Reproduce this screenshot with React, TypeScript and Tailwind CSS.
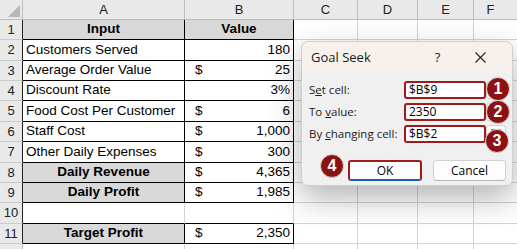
import React from 'react'

type Row = {
  n: number
  h: string
  a?: string
  b?: string
  dollar?: boolean
  kind: 'head' | 'plain' | 'total' | 'blank'
}

const rows: Row[] = [
  { n: 1, h: 'h-[20px]', a: 'Input', b: 'Value', kind: 'head' },
  { n: 2, h: 'h-[21px]', a: 'Customers Served', b: '180', kind: 'plain' },
  { n: 3, h: 'h-[20px]', a: 'Average Order Value', b: '25', dollar: true, kind: 'plain' },
  { n: 4, h: 'h-[20px]', a: 'Discount Rate', b: '3%', kind: 'plain' },
  { n: 5, h: 'h-[21px]', a: 'Food Cost Per Customer', b: '6', dollar: true, kind: 'plain' },
  { n: 6, h: 'h-[20px]', a: 'Staff Cost', b: '1,000', dollar: true, kind: 'plain' },
  { n: 7, h: 'h-[21px]', a: 'Other Daily Expenses', b: '300', dollar: true, kind: 'plain' },
  { n: 8, h: 'h-[20px]', a: 'Daily Revenue', b: '4,365', dollar: true, kind: 'total' },
  { n: 9, h: 'h-[20px]', a: 'Daily Profit', b: '1,985', dollar: true, kind: 'total' },
  { n: 10, h: 'h-[21px]', kind: 'blank' },
  { n: 11, h: 'h-[20px]', a: 'Target Profit', b: '2,350', dollar: true, kind: 'total' },
]

function Badge({ n, className }: { n: number; className: string }) {
  return (
    <div
      className={`absolute flex h-[24px] w-[24px] items-center justify-center rounded-full border border-[#d8d8d8] bg-[#8e1111] text-[16px] font-bold text-white ${className}`}
      style={{ fontFamily: '"Liberation Sans", Arial, sans-serif' }}
    >
      {n}
    </div>
  )
}

function Field({ label, value }: { label: React.ReactNode; value: string }) {
  return (
    <div className="flex h-[18px] items-center">
      <div className="w-[95px] text-[11.5px] text-[#1a1a1a]">{label}</div>
      <div className="flex h-[18px] w-[82px] items-center rounded-[3px] border-2 border-[#9e1b1b] bg-white pl-[3px] text-[12px] text-black">
        {value}
      </div>
    </div>
  )
}

function GoalSeek() {
  return (
    <div
      className="absolute left-[301px] top-[41px] h-[145px] w-[212px] rounded-[7px] border border-[#cfcfcf] bg-[#f0f0f0] shadow-[0_12px_32px_rgba(0,0,0,0.3)]"
      style={{ fontFamily: '"Open Sans", "Noto Sans", sans-serif' }}
    >
      <div className="flex h-[31px] items-center rounded-t-[7px] bg-[#f6f1ec] pl-[9px] text-[13px] text-[#1a1a1a]">
        <span>Goal Seek</span>
        <span className="ml-[64px] text-[13px]">?</span>
        <svg className="ml-[35px]" width="11" height="11" viewBox="0 0 11 11">
          <path d="M0.5 0.5 L10.5 10.5 M10.5 0.5 L0.5 10.5" stroke="#222" strokeWidth="1.1" />
        </svg>
      </div>
      <div className="flex flex-col gap-[4px] pl-[7px] pt-[8px]">
        <Field
          label={
            <>
              S<span className="underline">e</span>t cell:
            </>
          }
          value="$B$9"
        />
        <Field
          label={
            <>
              To <span className="underline">v</span>alue:
            </>
          }
          value="2350"
        />
        <Field
          label={
            <>
              By <span className="underline">c</span>hanging cell:
            </>
          }
          value="$B$2"
        />
        <div className="mt-[13px] flex gap-[11px] pl-[39px]">
          <div className="flex h-[21px] w-[74px] items-center justify-center rounded-[3px] border-2 border-[#9e1b1b] border-b-[#1f5fa8] bg-white text-[12px] text-black">
            OK
          </div>
          <div className="flex h-[21px] w-[73px] items-center justify-center rounded-[4px] border border-[#d0d0d0] border-b-[#b5b5b5] bg-[#fdfdfd] text-[12px] text-black">
            Cancel
          </div>
        </div>
      </div>
      {[39, 61, 83].map((t) => (
        <div
          key={t}
          className="absolute left-[184px] h-[18px] w-[20px] rounded-[3px] border border-[#d0d0d0] bg-[#fbfbfb]"
          style={{ top: t }}
        >
          <div className="ml-[4px] mt-[3px] h-[8px] w-[10px] bg-[#5b8fd1]" />
        </div>
      ))}
      <Badge n={1} className="left-[184px] top-[35px]" />
      <Badge n={2} className="left-[184px] top-[58px]" />
      <Badge n={3} className="left-[183px] top-[87px]" />
      <Badge n={4} className="left-[18px] top-[112px]" />
    </div>
  )
}

export default function App() {
  return (
    <div
      className="relative h-[249px] w-[517px] overflow-hidden bg-white text-[13.5px] text-black"
      style={{ fontFamily: '"Liberation Sans", Arial, sans-serif' }}
    >
      <div className="flex h-[20px] bg-[#e9e9e9] text-[13px] text-[#222]">
        <div className="relative w-[23px] border-b border-r border-[#bdbdbd]">
          <div className="absolute bottom-[2px] right-[2px] h-0 w-0 border-b-[12px] border-l-[12px] border-b-[#b7b7b7] border-l-transparent" />
        </div>
        <div className="flex w-[162px] items-center justify-center border-b border-r border-[#bdbdbd]">A</div>
        <div className="flex w-[109px] items-center justify-center border-b border-r border-[#bdbdbd]">B</div>
        <div className="flex w-[64px] items-center justify-center border-b border-r border-[#bdbdbd]">C</div>
        <div className="flex w-[60px] items-center justify-center border-b border-r border-[#bdbdbd]">D</div>
        <div className="flex w-[56px] items-center justify-center border-b border-r border-[#bdbdbd]">E</div>
        <div className="flex flex-1 items-center justify-center border-b border-[#bdbdbd] pr-[10px]">F</div>
      </div>

      {rows.map((r) => (
        <div key={r.n} className={`flex ${r.h}`}>
          <div className="flex w-[23px] items-center justify-center border-b border-r border-b-[#cacaca] border-r-[#222] bg-[#e9e9e9] text-[13px] text-[#222]">
            {r.n}
          </div>
          <div
            className={`flex w-[162px] items-center border-b border-r border-b-black ${
              r.kind === 'blank' ? 'border-r-[#d4d4d4]' : 'border-r-black'
            } ${r.kind === 'head' || r.kind === 'total' ? 'justify-center bg-[#d9d9d9] font-bold' : 'pl-[3px]'}`}
          >
            {r.a}
          </div>
          <div
            className={`flex w-[109px] items-center border-b border-r border-b-black ${
              r.kind === 'blank' ? 'border-r-[#d4d4d4]' : 'border-r-black'
            } ${r.kind === 'head' ? 'justify-center bg-[#d9d9d9] font-bold' : 'justify-between pl-[10px] pr-[3px]'}`}
          >
            {r.kind === 'head' ? (
              r.b
            ) : (
              <>
                <span>{r.dollar ? '$' : ''}</span>
                <span>{r.b}</span>
              </>
            )}
          </div>
          <div className="w-[64px] border-b border-r border-[#d4d4d4]" />
          <div className="w-[60px] border-b border-r border-[#d4d4d4]" />
          <div className="w-[56px] border-b border-r border-[#d4d4d4]" />
          <div className="flex-1 border-b border-[#d4d4d4]" />
        </div>
      ))}

      <div className="flex h-[20px]">
        <div className="w-[23px] border-r border-[#bdbdbd] bg-[#e9e9e9]" />
        <div className="w-[162px] border-r border-[#d4d4d4]" />
        <div className="w-[109px] border-r border-[#d4d4d4]" />
        <div className="w-[64px] border-r border-[#d4d4d4]" />
        <div className="w-[60px] border-r border-[#d4d4d4]" />
        <div className="w-[56px] border-r border-[#d4d4d4]" />
        <div className="flex-1" />
      </div>

      <GoalSeek />
    </div>
  )
}
